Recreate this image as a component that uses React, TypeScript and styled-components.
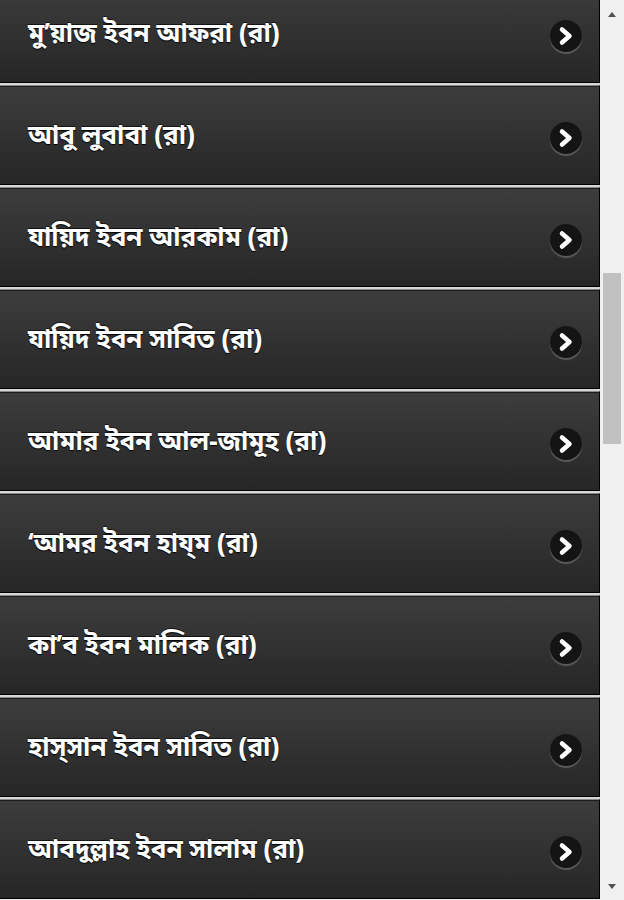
import React from "react";
import styled, { createGlobalStyle } from "styled-components";

const GlobalStyle = createGlobalStyle`
  html, body {
    margin: 0;
    padding: 0;
    background: #f0f0f0;
    overflow: hidden;
  }
  * { box-sizing: border-box; }
`;

const Screen = styled.div`
  display: flex;
  width: 624px;
  height: 900px;
  overflow: hidden;
  background: #f0f0f0;
`;

const Viewport = styled.div`
  flex: 0 0 600px;
  height: 900px;
  overflow: hidden;
`;

const List = styled.ul<{ $offset: number }>`
  list-style: none;
  margin: ${(p) => -p.$offset}px 0 0;
  padding: 0;
  display: flex;
  flex-direction: column;
  gap: 2px;
  background: #d6d6d6;
`;

const Item = styled.li`
  display: flex;
  align-items: center;
  justify-content: space-between;
  height: 100px;
  padding: 0 17px 0 28px;
  border-top: 1px solid #8a8a8a;
  border-bottom: 1px solid #000;
  border-right: 1px solid #000;
  background: linear-gradient(#3d3d3d, #262626);
  box-shadow: inset 0 1px 0 #1c1c1c;
  cursor: pointer;
`;

const Label = styled.span`
  font-family: "Noto Sans Bengali", "Noto Sans", "Lohit Bengali", sans-serif;
  font-size: 26px;
  font-weight: bold;
  color: #fff;
  text-shadow: 0 1px 1px #000, 0 -1px 0 rgba(0, 0, 0, 0.6);
  margin-top: 5px;
`;

const ArrowBadge = styled.span`
  display: flex;
  align-items: center;
  justify-content: center;
  width: 32px;
  height: 32px;
  margin-top: 5px;
  border-radius: 50%;
  background: #141414;
  box-shadow: 0 2px 1px rgba(255, 255, 255, 0.22);
`;

const Scrollbar = styled.div`
  flex: 0 0 24px;
  height: 900px;
  display: flex;
  flex-direction: column;
  background: #f0f0f0;
`;

const ScrollButton = styled.div`
  height: 28px;
  display: flex;
  align-items: center;
  justify-content: center;
`;

const Track = styled.div`
  flex: 1;
  display: flex;
  justify-content: center;
`;

const Thumb = styled.div`
  width: 18px;
  background: #c1c1c1;
`;

const names = [
  "মু’য়াজ ইবন আফরা (রা)",
  "আবু লুবাবা (রা)",
  "যায়িদ ইবন আরকাম (রা)",
  "যায়িদ ইবন সাবিত (রা)",
  "আমার ইবন আল-জামূহ (রা)",
  "‘আমর ইবন হায্ম (রা)",
  "কা’ব ইবন মালিক (রা)",
  "হাস্সান ইবন সাবিত (রা)",
  "আবদুল্লাহ ইবন সালাম (রা)",
];

const Chevron = () => (
  <svg width="18" height="20" viewBox="0 0 18 20">
    <path
      d="M5 3.5 L12.5 10 L5 16.5"
      fill="none"
      stroke="#fff"
      strokeWidth="4.5"
      strokeLinecap="round"
      strokeLinejoin="round"
    />
  </svg>
);

const Tri = ({ up }: { up: boolean }) => (
  <svg width="8" height="5" viewBox="0 0 8 5">
    <path d={up ? "M0 5 L4 0 L8 5 Z" : "M0 0 L4 5 L8 0 Z"} fill="#505050" />
  </svg>
);

export default function App() {
  return (
    <>
      <GlobalStyle />
      <Screen>
        <Viewport>
          <List $offset={17}>
            {names.map((n) => (
              <Item key={n}>
                <Label>{n}</Label>
                <ArrowBadge>
                  <Chevron />
                </ArrowBadge>
              </Item>
            ))}
          </List>
        </Viewport>
        <Scrollbar>
          <ScrollButton>
            <Tri up />
          </ScrollButton>
          <Track>
            <Thumb style={{ marginTop: 245, height: 171 }} />
          </Track>
          <ScrollButton>
            <Tri up={false} />
          </ScrollButton>
        </Scrollbar>
      </Screen>
    </>
  );
}
